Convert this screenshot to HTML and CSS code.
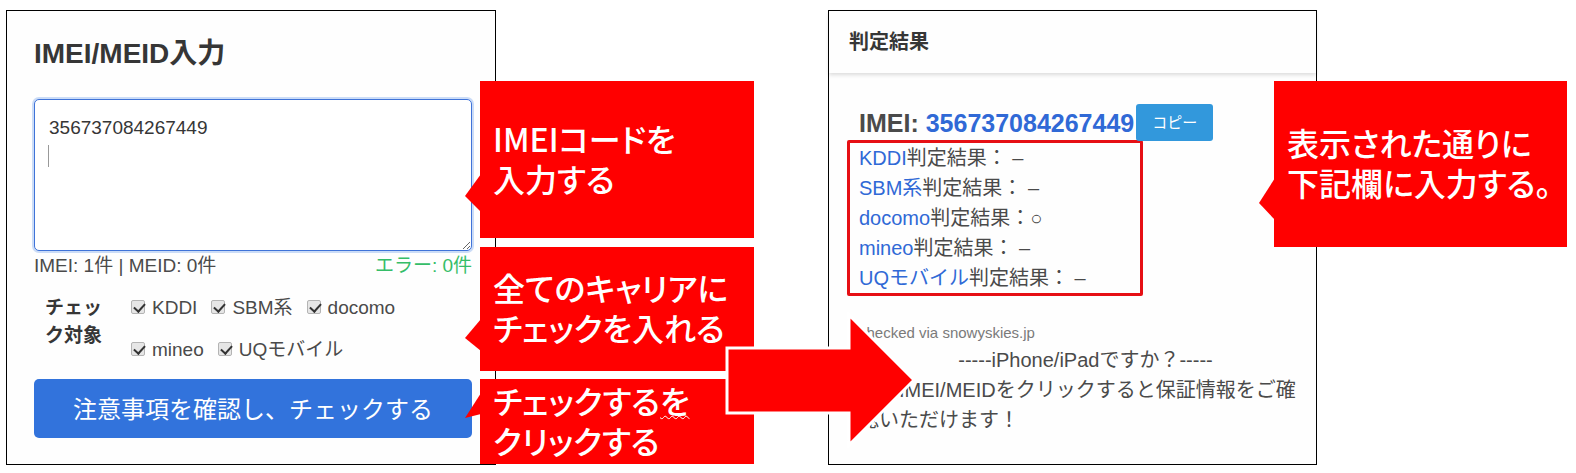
FILE: index.html
```html
<!DOCTYPE html>
<html lang="ja">
<head>
<meta charset="utf-8">
<meta name="viewport" content="width=device-width, initial-scale=1">
<title>IMEI/MEID入力</title>
<link rel="stylesheet" href="styles.css">
</head>
<body>
<main class="board">
  <section class="step">
    <form class="panel entry">
      <h1 class="entry-title"><label for="codes">IMEI/MEID入力</label></h1>
      <div class="field">
        <textarea class="codes" id="codes">356737084267449
</textarea>
        <span class="caret"></span>
      </div>
      <div class="counts">
        <span>IMEI: 1件 | MEID: 0件</span>
        <span class="errors">エラー: 0件</span>
      </div>
      <div class="targets" role="group" aria-labelledby="targets-label">
        <div class="targets-label" id="targets-label">チェック対象</div>
        <div class="options">
          <label class="option"><input type="checkbox" checked>KDDI</label>
          <label class="option"><input type="checkbox" checked>SBM系</label>
          <label class="option"><input type="checkbox" checked>docomo</label>
          <label class="option"><input type="checkbox" checked>mineo</label>
          <label class="option"><input type="checkbox" checked>UQモバイル</label>
        </div>
      </div>
      <button class="submit" type="button">注意事項を確認し、チェックする</button>
    </form>
    <div class="callout callout-code">
      <svg class="pointer" width="16" height="38" viewBox="0 0 16 38"><path d="M16 0L0 22L16 38Z"/></svg>
      <p>IMEIコードを<br>入力する</p>
    </div>
    <div class="callout callout-carrier">
      <svg class="pointer" width="16" height="32" viewBox="0 0 16 32"><path d="M16 0L0 19L16 32Z"/></svg>
      <p>全てのキャリアに<br>チェックを入れる</p>
    </div>
    <div class="callout callout-submit">
      <svg class="pointer" width="16" height="26" viewBox="0 0 16 26"><path d="M16 0L0 25L16 21Z"/></svg>
      <p>チェックする<span class="wavy">を</span><br>クリックする</p>
    </div>
  </section>

  <section class="step step-result">
    <div class="panel result">
      <h2 class="result-title">判定結果</h2>
      <div class="result-body">
        <div class="imei">
          <span>IMEI: <a href="#">356737084267449</a></span>
          <button class="copy" type="button">コピー</button>
        </div>
        <ul class="carriers">
          <li><a href="#">KDDI</a>判定結果： –</li>
          <li><a href="#">SBM系</a>判定結果： –</li>
          <li><a href="#">docomo</a>判定結果：○</li>
          <li><a href="#">mineo</a>判定結果： –</li>
          <li><a href="#">UQモバイル</a>判定結果： –</li>
        </ul>
        <p class="via">checked via snowyskies.jp</p>
        <p class="question">-----iPhone/iPadですか？-----</p>
        <p class="hint">上記IMEI/MEIDをクリックすると保証情報をご確認いただけます！</p>
      </div>
    </div>
    <div class="callout callout-result">
      <svg class="pointer" width="16" height="42" viewBox="0 0 16 42"><path d="M16 0L0 25L16 42Z"/></svg>
      <p>表示された通りに<br>下記欄に入力する。</p>
    </div>
    <svg class="arrow" width="192" height="136" viewBox="0 0 192 136"><path d="M3 36H125V3L190 68L125 133V101H3Z"/></svg>
  </section>
</main>
</body>
</html>
```
FILE: styles.css
```css
* {
  box-sizing: border-box;
}

body {
  margin: 0;
  padding: 10px 9px 8px 6px;
  background: #fff;
  color: #4a4a4a;
  font-family: "Liberation Sans", "Noto Sans CJK JP", sans-serif;
  font-size: 19px;
  line-height: 28px;
}

h1, h2, p, ul {
  margin: 0;
  padding: 0;
}

a {
  color: #3069d6;
  text-decoration: none;
}

button {
  border: 0;
  color: #fff;
  font-family: inherit;
}

.board {
  display: grid;
  grid-template-columns: 490fr 489fr;
  column-gap: 332px;
  padding-right: 250px;
}

.step {
  position: relative;
  display: grid;
}

.panel {
  border: 1px solid #000;
  background: #fefefe;
}

.entry {
  display: flex;
  flex-direction: column;
  padding: 23px 23px 24px 27px;
}

.entry-title {
  color: #363636;
  font-size: 28px;
  line-height: 40px;
}

.field {
  position: relative;
  display: grid;
  margin-top: 25px;
}

.codes {
  height: 152px;
  padding: 14px;
  border: 1px solid #3f73d8;
  border-radius: 5px;
  outline: 0;
  box-shadow: 0 0 0 2px #cbdcf7;
  background: #fff;
  color: #363636;
  font: inherit;
  resize: vertical;
}

.caret {
  position: absolute;
  top: 46px;
  left: 14px;
  width: 1px;
  height: 22px;
  background: #999;
}

.counts {
  display: flex;
  justify-content: space-between;
  margin-top: 1px;
}

.errors {
  color: #35bd68;
}

.targets {
  display: flex;
  gap: 26px;
  padding: 14px 11px 0;
}

.targets-label {
  width: 60px;
  color: #363636;
  font-weight: bold;
}

.options {
  display: flex;
  flex: 1;
  flex-wrap: wrap;
  gap: 14px;
}

.option {
  display: flex;
  align-items: center;
  gap: 7px;
}

.option input {
  position: relative;
  width: 14px;
  height: 14px;
  margin: 0 0 2px;
  border: 1px solid #b4b4b4;
  border-radius: 2px;
  background: #e6e6e6;
  appearance: none;
}

.option input:checked::after {
  position: absolute;
  top: 0;
  left: 4px;
  width: 5px;
  height: 9px;
  border: solid #333;
  border-width: 0 2px 2px 0;
  content: "";
  transform: rotate(42deg);
}

.submit {
  height: 59px;
  margin-top: 15px;
  padding: 0 0 3px;
  border-radius: 5px;
  background: #3273dc;
  font-size: 24px;
}

.result-title {
  padding: 16px 20px;
  box-shadow: 0 2px 4px rgba(10, 10, 10, 0.14);
  color: #363636;
  font-size: 20px;
  line-height: 30px;
}

.result-body {
  padding: 31px 4px 29px 18px;
  font-size: 20px;
  line-height: 30px;
}

.imei {
  display: flex;
  align-items: center;
  padding-left: 12px;
  font-size: 25px;
  font-weight: bold;
}

.copy {
  height: 37px;
  margin-left: 2px;
  padding: 0 16px 2px;
  border-radius: 3px;
  background: #3298dc;
  font-size: 15px;
}

.carriers {
  width: 296px;
  margin-top: -1px;
  padding: 0 9px;
  border: 3px solid #e60f14;
  border-radius: 2px;
  list-style: none;
}

.via,
.question,
.hint {
  padding-left: 12px;
}

.via {
  margin-top: 25px;
  color: #7a7a7a;
  font-size: 15px;
  line-height: 24px;
}

.question {
  text-align: center;
}

.callout {
  position: absolute;
  left: calc(100% - 16px);
  display: flex;
  align-items: center;
  width: 274px;
  padding: 0 0 4px 13px;
  background: #f00;
  color: #fff;
  font-family: "Noto Sans CJK JP", sans-serif;
  font-feature-settings: "palt";
  font-size: 32px;
  font-weight: 500;
  line-height: 40px;
  white-space: nowrap;
}

.callout-code {
  top: 71px;
  height: 157px;
}

.callout-carrier {
  top: 237px;
  height: 124px;
}

.callout-submit {
  top: 369px;
  height: 85px;
}

.callout-result {
  top: 71px;
  left: calc(100% - 43px);
  width: 293px;
  height: 166px;
}

.pointer {
  position: absolute;
  right: calc(100% - 1px);
  fill: #f00;
}

.callout-code .pointer {
  top: 93px;
}

.callout-carrier .pointer {
  top: 72px;
}

.callout-submit .pointer {
  top: 14px;
}

.callout-result .pointer {
  top: 97px;
}

.wavy {
  text-decoration: underline wavy 1px;
}

.arrow {
  position: absolute;
  top: 302px;
  left: -104px;
  fill: #f00;
  stroke: #fff;
  stroke-width: 3px;
}
```
